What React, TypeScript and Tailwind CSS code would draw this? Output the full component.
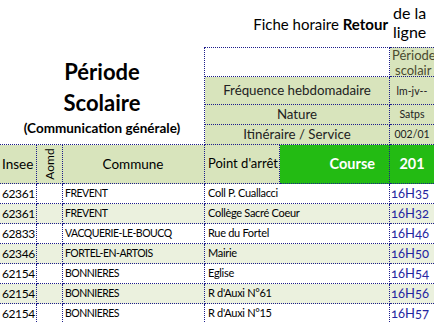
import React from "react";

const rows = [
  ["62361", "FREVENT", "Coll P. Cuallacci", "16H35"],
  ["62361", "FREVENT", "Collège Sacré Coeur", "16H32"],
  ["62833", "VACQUERIE-LE-BOUCQ", "Rue du Fortel", "16H46"],
  ["62346", "FORTEL-EN-ARTOIS", "Mairie", "16H50"],
  ["62154", "BONNIERES", "Eglise", "16H54"],
  ["62154", "BONNIERES", "R d'Auxi N°61", "16H56"],
  ["62154", "BONNIERES", "R d'Auxi N°15", "16H57"],
];

const b = "border-dotted border-[#1c1c8a]";

export default function App() {
  return (
    <div
      className="w-[434px] h-[322px] overflow-hidden bg-white text-black grid grid-cols-[37px_26px_142px_75px_110px_44px] grid-rows-[47px_30px_28px_20px_20px_39px_repeat(7,20px)]"
      style={{ fontFamily: "Lato, 'Liberation Sans', sans-serif" }}
    >
      {/* Row 1 */}
      <div className="col-span-3" />
      <div className="col-span-2 flex items-center justify-end pr-[2px] pt-[1px] text-[15px]">
        <span>
          Fiche horaire <b>Retour</b>
        </span>
      </div>
      <div className="pl-[3px] pt-[3px] text-[16px] leading-[19px] overflow-visible whitespace-normal">
        de la ligne
      </div>

      {/* Title */}
      <div
        className={`col-start-1 col-span-3 row-start-2 row-span-4 border-r border-b ${b} flex flex-col items-center justify-end pb-[7px]`}
      >
        <div className="text-[22px] font-bold leading-[31px]">Période</div>
        <div className="text-[22px] font-bold leading-[31px]">Scolaire</div>
        <div className="text-[13.5px] font-bold leading-[18px] mt-[1px]">(Communication générale)</div>
      </div>

      {/* Box row 2 */}
      <div className={`col-start-4 col-span-2 row-start-2 border-t border-r border-b ${b} bg-white`} />
      <div className={`col-start-6 row-start-2 border-t border-b ${b} bg-[#d8e4bc] overflow-hidden whitespace-nowrap pl-[2px] text-[13px] leading-[15px] text-[#4a4a30]`}>
        Période
        <br />
        <span className="pl-[3px]">scolair</span>
      </div>

      {/* Box rows 3-5 */}
      {[
        ["Fréquence hebdomadaire", "lm-jv--"],
        ["Nature", "Satps"],
        ["Itinéraire / Service", "002/01"],
      ].map(([l, v], i) => (
        <React.Fragment key={l}>
          <div className={`col-start-4 col-span-2 border-r border-b ${b} bg-[#d8e4bc] flex items-center justify-center text-[13.3px] text-[#222]`}>
            {l}
          </div>
          <div className={`col-start-6 border-b ${b} bg-[#d8e4bc] flex items-center justify-center text-[10.5px] text-[#222] ${i === 0 ? "pt-[2px]" : ""}`}>
            {v}
          </div>
        </React.Fragment>
      ))}

      {/* Header row */}
      <div className={`border-r border-b ${b} bg-[#d8e4bc] flex items-center pl-[2px] text-[13.5px]`}>Insee</div>
      <div className={`border-r border-b ${b} bg-[#d8e4bc] flex items-center justify-center`}>
        <span className="-rotate-90 text-[12px] inline-block">Aomd</span>
      </div>
      <div className={`border-r border-b ${b} bg-[#d8e4bc] flex items-center justify-center text-[13.5px] pr-[1px]`}>Commune</div>
      <div className={`border-r border-b ${b} bg-[#d8e4bc] flex items-center pl-[3px] text-[13px]`}>Point d'arrêt</div>
      <div className={`border-r border-b ${b} bg-[#23bb13] flex items-center justify-end pr-[14px] text-[14.5px] font-bold text-white`}>Course</div>
      <div className={`border-b ${b} bg-[#23bb13] flex items-center justify-center text-[14.5px] font-bold text-white`}>201</div>

      {/* Data rows */}
      {rows.map(([insee, commune, arret, time], i) => {
        const bg = i % 2 === 1 ? "bg-[#ebf1de]" : "bg-white";
        return (
          <React.Fragment key={i}>
            <div className={`border-r border-b ${b} ${bg} flex items-center pl-[2px] text-[12px] tracking-[-0.4px]`}>{insee}</div>
            <div className={`border-r border-b ${b} ${bg}`} />
            <div className={`border-r border-b ${b} ${bg} flex items-center pl-[2px] text-[10.5px] tracking-[-0.5px] whitespace-nowrap`}>{commune}</div>
            <div className={`col-span-2 border-r border-b ${b} ${bg} flex items-center pl-[3px] text-[11px] tracking-[-0.3px] whitespace-nowrap`}>{arret}</div>
            <div className={`border-b ${b} ${bg} flex items-center justify-end pr-[5px] text-[13px] text-[#2424a0] oldstyle-nums`}>{time}</div>
          </React.Fragment>
        );
      })}
    </div>
  );
}
